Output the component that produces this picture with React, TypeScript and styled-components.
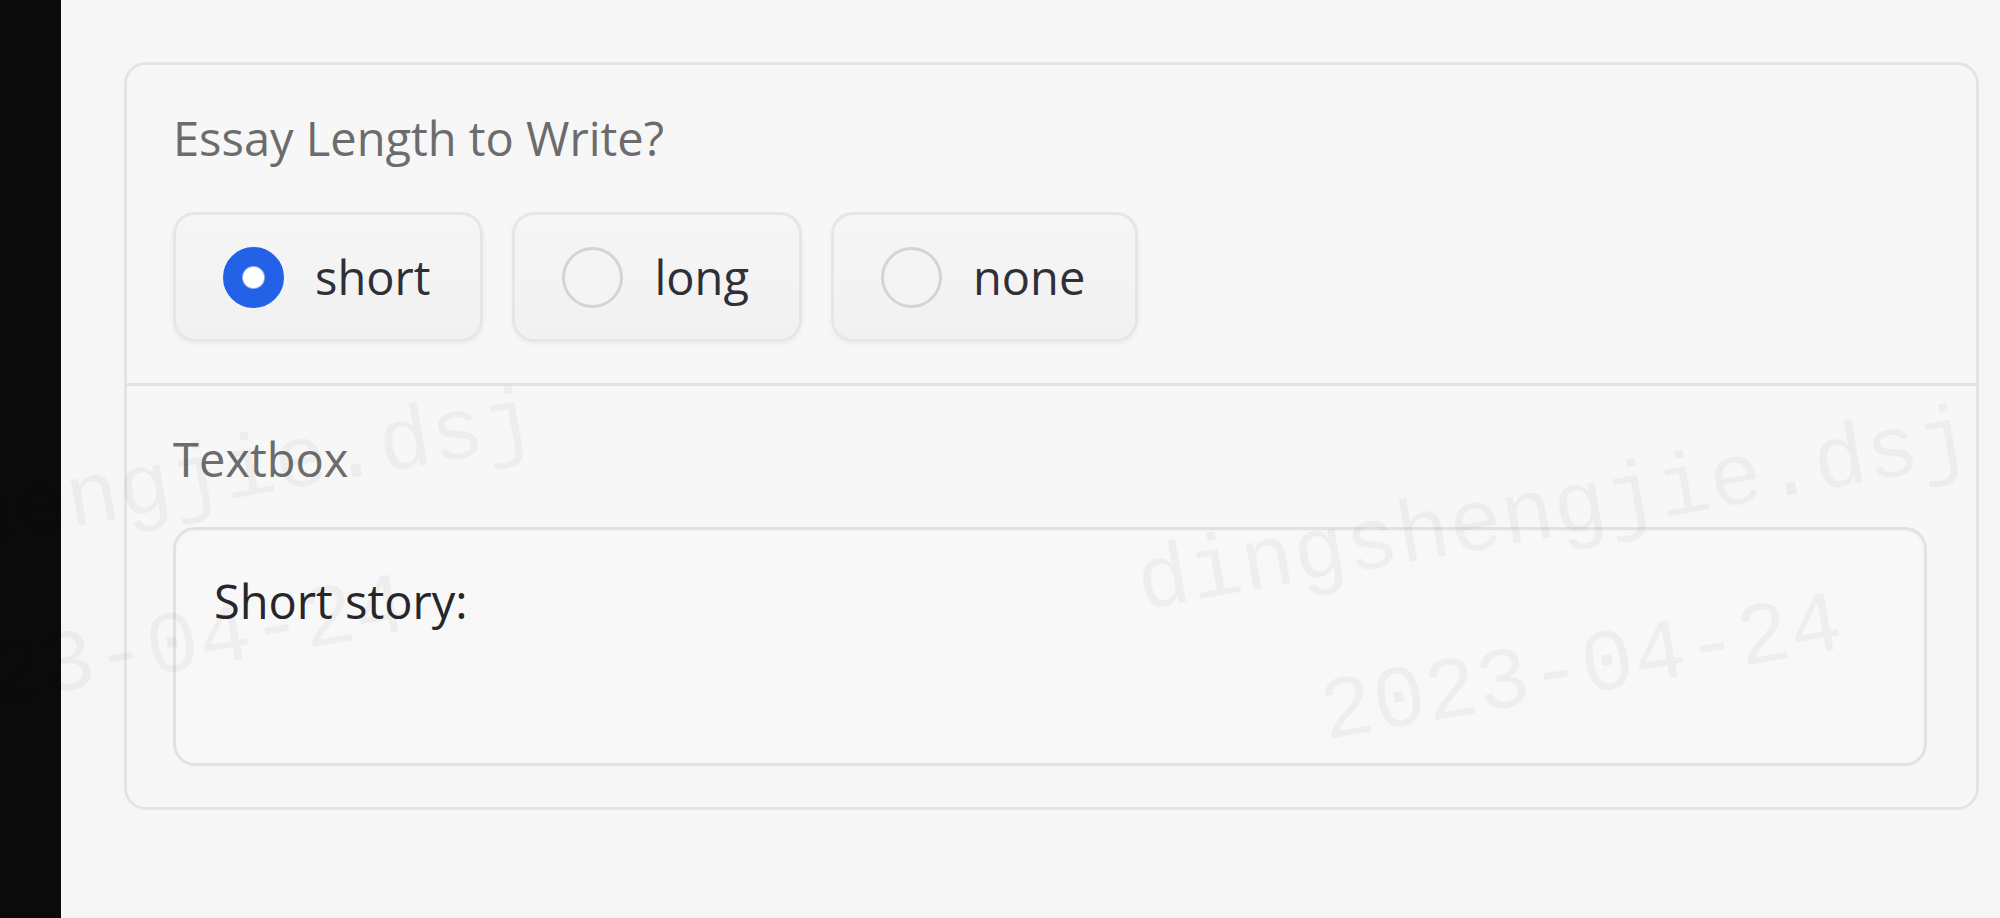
import React from "react";
import styled, { createGlobalStyle } from "styled-components";

const GlobalStyle = createGlobalStyle`
  html, body {
    margin: 0;
    padding: 0;
    background: #f6f6f6;
  }
  body {
    font-family: "Open Sans", "Noto Sans", sans-serif;
    overflow: hidden;
  }
`;

const Page = styled.div`
  display: flex;
  width: 2000px;
  height: 918px;
  position: relative;
  overflow: hidden;
`;

const SideStrip = styled.div`
  width: 61px;
  flex-shrink: 0;
  background: #0b0b0b;
`;

const Main = styled.main`
  flex: 1;
  background: #f6f6f6;
  padding: 62px 21px 0 63px;
`;

const Card = styled.div`
  border: 3px solid #e4e4e4;
  border-radius: 22px;
  background: #f7f7f7;
  display: flex;
  flex-direction: column;
`;

const Section = styled.section<{ $divider?: boolean }>`
  display: flex;
  flex-direction: column;
  padding: 45px 49px 41px 46px;
  border-top: ${p => (p.$divider ? "3px solid #e3e3e3" : "none")};
`;

const BlockLabel = styled.span`
  font-size: 47px;
  line-height: 56px;
  color: #6c6c6c;
`;

const RadioRow = styled.div`
  display: flex;
  gap: 29px;
  margin-top: 46px;
`;

const RadioOption = styled.label`
  display: flex;
  align-items: center;
  gap: 31px;
  height: 130px;
  box-sizing: border-box;
  padding: 0 50px 0 47px;
  border: 3px solid #e6e6e6;
  border-radius: 22px;
  background: linear-gradient(#f6f6f6, #f1f1f1);
  box-shadow: 0 2px 5px rgba(0, 0, 0, 0.05);
  cursor: pointer;
`;

const RadioDot = styled.input`
  appearance: none;
  margin: 0;
  width: 61px;
  height: 61px;
  border-radius: 50%;
  box-sizing: border-box;
  border: 3px solid #d4d4d4;
  background: #f4f4f4;

  &:checked {
    border-color: #2361e6;
    background: radial-gradient(circle, #ffffff 0 10px, #2361e6 12px);
  }
`;

const OptionText = styled.span`
  font-size: 47px;
  line-height: 56px;
  color: #2f2f38;
`;

const TextArea = styled.textarea`
  margin-top: 40px;
  height: 239px;
  box-sizing: border-box;
  padding: 43px 38px;
  border: 3px solid #e2e2e2;
  border-radius: 22px;
  background: #f8f8f8;
  box-shadow: inset 0 1px 3px rgba(0, 0, 0, 0.03);
  font-family: "Open Sans", "Noto Sans", sans-serif;
  font-size: 47px;
  line-height: 56px;
  color: #26262b;
  resize: none;
  outline: none;
`;

const WatermarkLayer = styled.div`
  position: absolute;
  inset: 0;
  pointer-events: none;
`;

const Watermark = styled.div`
  position: absolute;
  width: 1000px;
  margin-left: -500px;
  margin-top: -160px;
  transform: rotate(-10deg);
  text-align: center;
  font-family: "Liberation Mono", "DejaVu Sans Mono", monospace;
  font-size: 88px;
  line-height: 160px;
  color: rgba(0, 0, 0, 0.04);
  white-space: pre;
`;

const options = ["short", "long", "none"];

// tiled watermark over the page, the left copy runs off the edge
const watermarks = [
  { x: 133, y: 574 },
  { x: 1568, y: 592 },
];

export default function App() {
  const [choice, setChoice] = React.useState("short");

  return (
    <>
      <GlobalStyle />
      <Page>
        <SideStrip />
        <Main>
          <Card>
            <Section>
              <BlockLabel>Essay Length to Write?</BlockLabel>
              <RadioRow>
                {options.map(o => (
                  <RadioOption key={o}>
                    <RadioDot
                      type="radio"
                      name="length"
                      checked={choice === o}
                      onChange={() => setChoice(o)}
                    />
                    <OptionText>{o}</OptionText>
                  </RadioOption>
                ))}
              </RadioRow>
            </Section>
            <Section $divider>
              <BlockLabel>Textbox</BlockLabel>
              <TextArea defaultValue="Short story:" />
            </Section>
          </Card>
        </Main>
        <WatermarkLayer>
          {watermarks.map((w, i) => (
            <Watermark key={i} style={{ left: w.x, top: w.y }}>
              {"dingshengjie.dsj\n2023-04-24"}
            </Watermark>
          ))}
        </WatermarkLayer>
      </Page>
    </>
  );
}
